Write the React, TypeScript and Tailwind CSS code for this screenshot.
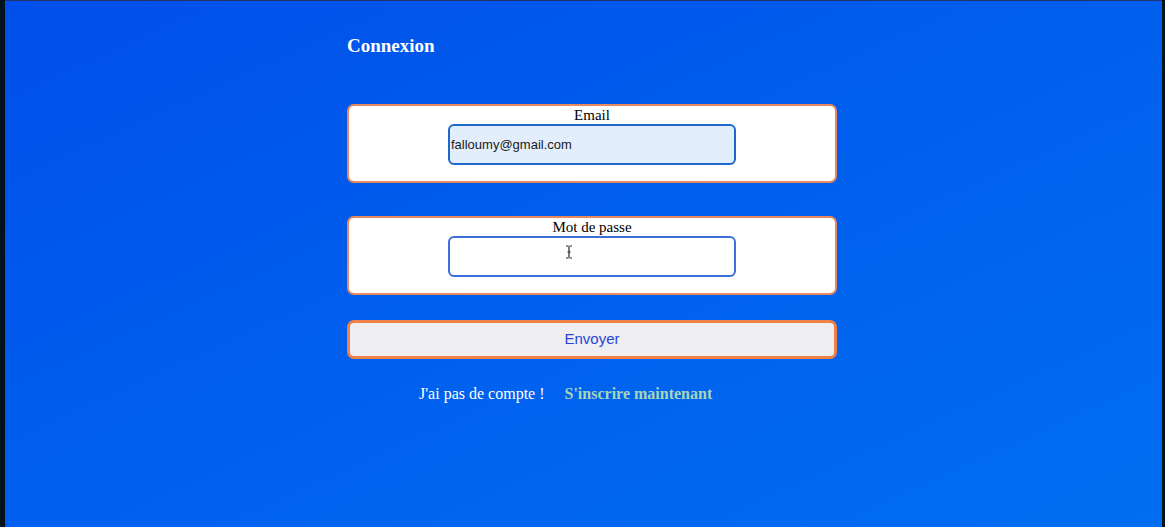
import React from "react";

export default function App() {
  return (
    <div className="flex h-[527px] w-full overflow-hidden bg-[#00121c]">
      <div className="w-[5px] shrink-0 bg-[#00121c]" />
      <div className="flex min-w-0 flex-1 flex-col bg-gradient-to-br from-[#004fea] to-[#006ef1]">
        <div className="h-[1px] w-full bg-[#23336a]" />
        <div className="ml-[342px] flex w-[490px] flex-col" style={{ fontFamily: '"Liberation Serif", serif' }}>
          <h1 className="mt-[34px] text-[19px] font-bold leading-[22px] text-white">Connexion</h1>

          <div className="mt-[47px] flex h-[79px] flex-col items-center rounded-[7px] border-2 border-[#e98a5e] bg-white">
            <label className="mt-[1px] text-[15px] leading-[17px] text-black">Email</label>
            <div className="flex h-[41px] w-[288px] items-center rounded-[6px] border-2 border-[#1d68c9] bg-[#e2eefc] pl-[1px]">
              <span className="text-[13px] text-[#1a1a1a]" style={{ fontFamily: '"Liberation Sans", Arial, sans-serif' }}>
                falloumy@gmail.com
              </span>
            </div>
          </div>

          <div className="mt-[33px] flex h-[79px] flex-col items-center rounded-[7px] border-2 border-[#e98a5e] bg-white">
            <label className="mt-[1px] text-[15px] leading-[17px] text-black">Mot de passe</label>
            <div className="relative h-[41px] w-[288px] rounded-[6px] border-2 border-[#3a70d8] bg-white">
              <svg className="absolute left-[115px] top-[7px]" width="8" height="14" viewBox="0 0 8 14">
                <path d="M1 1 H3.5 M4.5 1 H7 M4 1.5 V12.5 M1 13 H3.5 M4.5 13 H7 M2.5 7 H5.5" stroke="#222" strokeWidth="1.2" fill="none" />
              </svg>
            </div>
          </div>

          <button className="mt-[25px] flex h-[39px] items-center justify-center rounded-[7px] border-[3px] border-[#ef8048] bg-[#eeedf0]">
            <span className="text-[15px] text-[#2a45d6]" style={{ fontFamily: '"Liberation Sans", Arial, sans-serif' }}>
              Envoyer
            </span>
          </button>

          <div className="ml-[72px] mt-[26px] flex items-center gap-[20px] text-[16px] leading-[18px]">
            <span className="text-white">J'ai pas de compte !</span>
            <span className="font-bold text-[#a8d5b6]">S'inscrire maintenant</span>
          </div>
        </div>
      </div>
      <div className="w-[3px] shrink-0 bg-[#00121c]" />
    </div>
  );
}
